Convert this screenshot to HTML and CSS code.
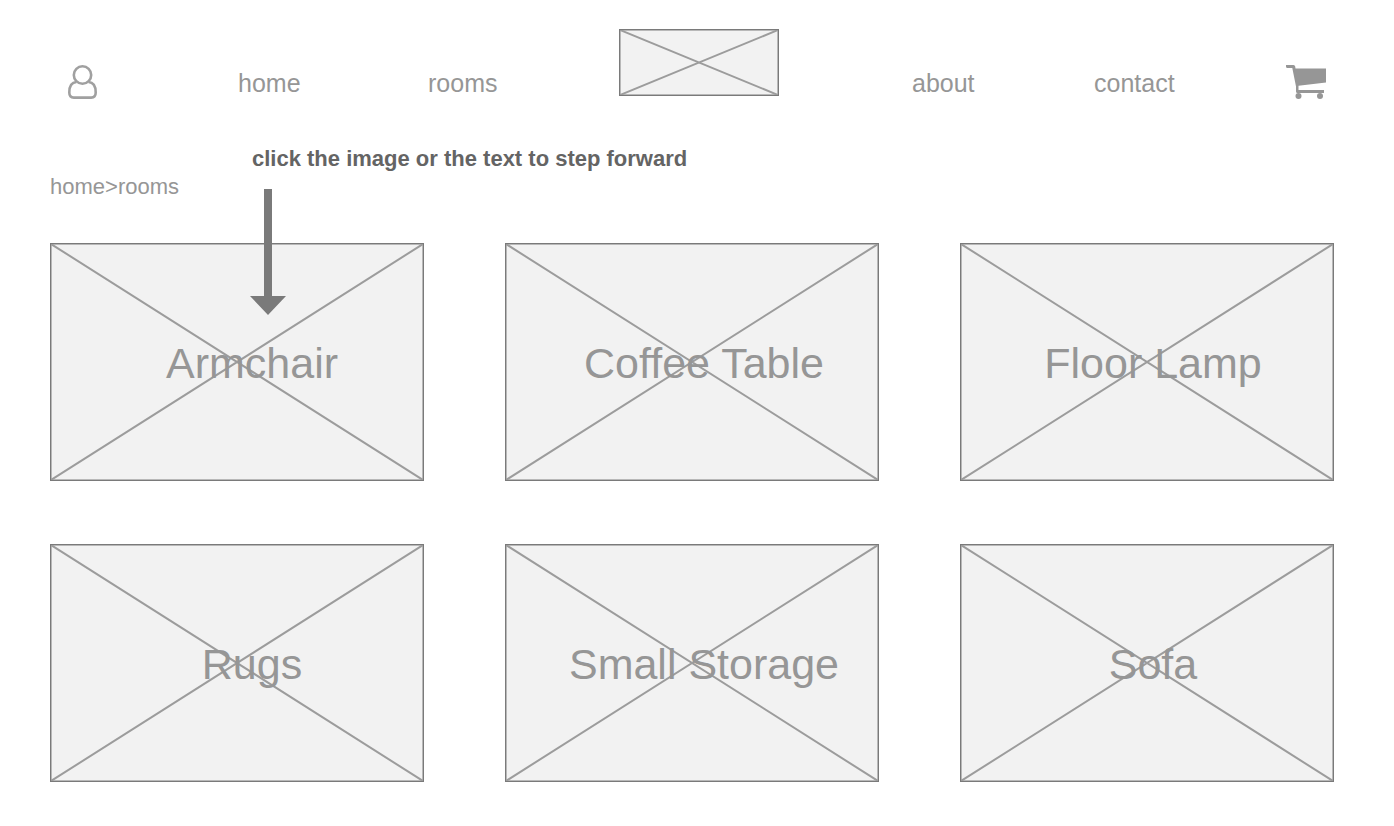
FILE: index.html
```html
<!DOCTYPE html>
<html lang="en">
<head>
<meta charset="utf-8">
<meta name="viewport" content="width=device-width, initial-scale=1">
<title>Rooms</title>
<link rel="stylesheet" href="styles.css">
</head>
<body>
<svg class="sprite" aria-hidden="true">
  <symbol id="cross" viewBox="0 0 100 100" preserveAspectRatio="none">
    <path d="M0 0L100 100M0 100L100 0" vector-effect="non-scaling-stroke"/>
  </symbol>
</svg>
<header class="header">
  <a class="icon-link" href="#account" aria-label="Account">
    <svg class="user-icon" viewBox="0 0 31 36">
      <path d="M9.500 18C4.800 18.300 2.300 22 2.300 28.500C2.300 31.800 4 33.600 6.800 33.600H24.200C27 33.600 28.700 31.800 28.700 28.500C28.700 22 26.200 18.300 21.500 18"/>
      <circle cx="15.500" cy="11" r="8.700"/>
    </svg>
  </a>
  <a class="nav-link" href="#home">home</a>
  <a class="nav-link" href="#rooms">rooms</a>
  <a class="logo placeholder" href="#home" aria-label="Logo"><svg class="cross"><use href="#cross"/></svg></a>
  <a class="nav-link" href="#about">about</a>
  <a class="nav-link" href="#contact">contact</a>
  <a class="icon-link" href="#cart" aria-label="Cart">
    <svg class="cart-icon" viewBox="0 0 41 36">
      <path d="M0 1H7.500Q9 1 9.200 2.500L9.500 4.500H40V18.500L12.500 21.800V26H38V29H11.500Q10 29 10 27.500V22.500L6.300 4H1.500Q0 4 0 2.500Z"/>
      <circle cx="12.500" cy="32" r="3"/>
      <circle cx="34" cy="32" r="3"/>
    </svg>
  </a>
</header>
<main class="main">
  <div class="hint">
    <strong>click the image or the text to step forward</strong>
    <svg class="arrow" viewBox="0 0 36 126" aria-hidden="true"><path d="M14 0H22V107H36L18 126L0 107H14Z"/></svg>
  </div>
  <nav class="crumbs" aria-label="Breadcrumb"><a href="#home">home</a>&gt;<a href="#rooms">rooms</a></nav>
  <div class="grid">
    <a class="card placeholder first" href="#armchair"><svg class="cross"><use href="#cross"/></svg><span class="label">Armchair</span></a>
    <a class="card placeholder second" href="#coffee-table"><svg class="cross"><use href="#cross"/></svg><span class="label">Coffee Table</span></a>
    <a class="card placeholder third" href="#floor-lamp"><svg class="cross"><use href="#cross"/></svg><span class="label">Floor Lamp</span></a>
    <a class="card placeholder first" href="#rugs"><svg class="cross"><use href="#cross"/></svg><span class="label">Rugs</span></a>
    <a class="card placeholder second" href="#small-storage"><svg class="cross"><use href="#cross"/></svg><span class="label">Small Storage</span></a>
    <a class="card placeholder third" href="#sofa"><svg class="cross"><use href="#cross"/></svg><span class="label">Sofa</span></a>
  </div>
</main>
</body>
</html>
```
FILE: styles.css
```css
* { box-sizing: border-box; }

body {
  margin: 0;
  background: #fff;
  color: #969696;
  font-family: "Liberation Sans", Arial, sans-serif;
}

a { color: inherit; text-decoration: none; }

.sprite { position: absolute; width: 0; height: 0; }

.header {
  display: grid;
  grid-template-columns: 171fr 190fr 191fr 293fr 182fr 192fr 41fr;
  align-items: end;
  padding: 29px 67px 0;
}

.nav-link { padding-bottom: 3px; font-size: 25px; line-height: 28px; }

.icon-link { display: flex; }

.user-icon { width: 31px; height: 36px; fill: #fff; stroke: #a0a0a0; stroke-width: 2.6; }

.cart-icon { width: 41px; height: 36px; fill: #969696; }

.placeholder {
  position: relative;
  display: block;
  border: 1px solid #7a7a7a;
  background: #f2f2f2;
  box-shadow: inset 0 0 0 1px #b8b8b8;
}

.cross {
  position: absolute;
  inset: 0;
  width: 100%;
  height: 100%;
  fill: none;
  stroke: #9c9c9c;
  stroke-width: 2;
}

.logo { align-self: start; width: 160px; height: 67px; margin-bottom: 4px; }

.main { padding: 45px 60px 45px 50px; }

.hint {
  position: relative;
  width: fit-content;
  margin-left: 202px;
  color: #646464;
  font-size: 22px;
  line-height: 28px;
}

.arrow {
  position: absolute;
  z-index: 1;
  top: 44px;
  left: -2px;
  width: 36px;
  height: 126px;
  fill: #7a7a7a;
}

.crumbs { font-size: 22px; line-height: 28px; }

.grid {
  display: grid;
  grid-template-columns: repeat(3, 1fr);
  gap: 63px 81px;
  margin-top: 42px;
}

.card {
  display: flex;
  align-items: center;
  justify-content: center;
  aspect-ratio: 374 / 238;
  padding-top: 2px;
}

.label { position: relative; font-size: 43px; line-height: 50px; }

.first { padding-left: 30px; }
.second { padding-left: 24px; }
.third { padding-left: 12px; }
```
